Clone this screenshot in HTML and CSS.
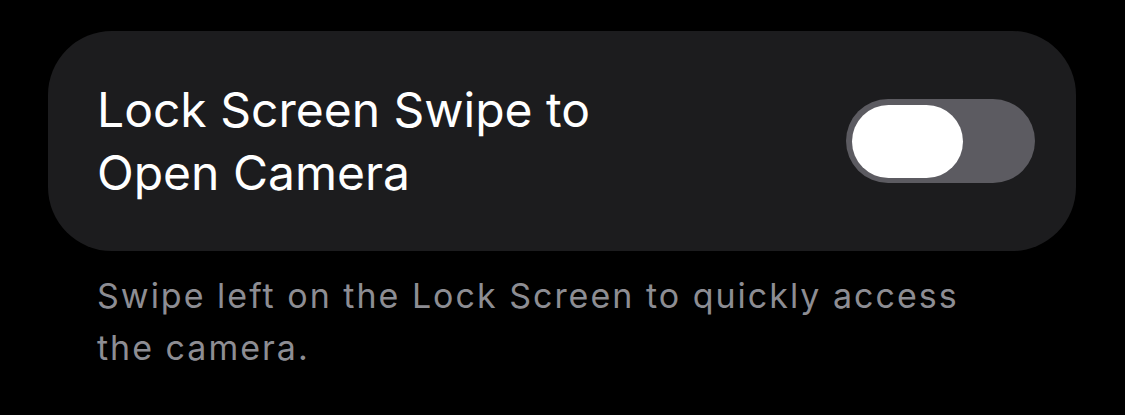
FILE: index.html
```html
<!DOCTYPE html>
<html lang="en">
<head>
    <meta charset="UTF-8">
    <title>Camera</title>
    <link rel="stylesheet" href="styles.css">
</head>
<body>

<div class="page">

    <div class="group">
        <div class="cell">
            <span class="label">Lock Screen Swipe to<br>Open Camera</span>
            <span class="switch"><span class="knob"></span></span>
        </div>
    </div>

    <p class="footer">Swipe left on the Lock Screen to quickly access<br>the camera.</p>

</div>

</body>
</html>
```

FILE: styles.css
```css
* {
    padding: 0;
    margin: 0;
    box-sizing: border-box;
}

body {
    background: #000;
    font-family: Inter, "Noto Sans", sans-serif;
    width: 1125px;
    height: 415px;
    overflow: hidden;
}

.page {
    padding: 31px 49px 0 48px;
}

.group {
    background: #1c1c1e;
    border-radius: 64px;
    height: 220px;
}

.cell {
    height: 100%;
    display: flex;
    align-items: center;
    justify-content: space-between;
    padding: 0 41px 0 49px;
}

.label {
    color: #fff;
    font-size: 48px;
    line-height: 63px;
}

.switch {
    width: 189px;
    height: 84px;
    border-radius: 42px;
    background: #5c5b61;
    padding: 5px 6px;
    display: flex;
    align-items: center;
}

.knob {
    width: 111px;
    height: 73px;
    border-radius: 37px;
    background: #fff;
}

.footer {
    margin: 19px 0 0 49px;
    color: #8d8d93;
    font-size: 34px;
    line-height: 52px;
    letter-spacing: 2px;
}
```
